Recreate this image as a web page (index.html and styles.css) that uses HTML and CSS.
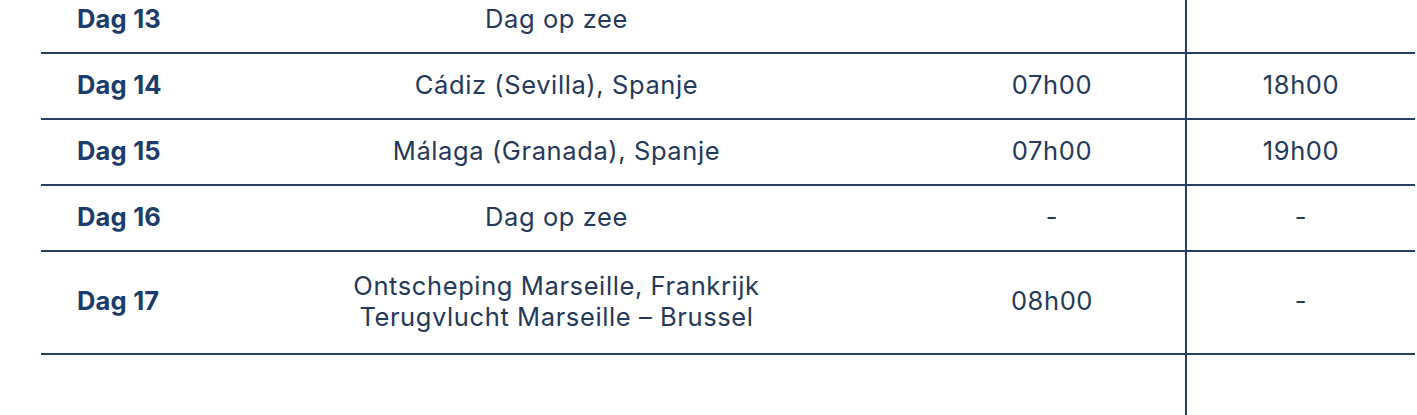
FILE: index.html
```html
<!DOCTYPE html>
<html lang="nl">
<head>
<meta charset="utf-8">
<title>Reisschema</title>
<link rel="stylesheet" href="styles.css">
</head>
<body>
<div class="schedule">
  <div class="row">
    <div class="cell day">Dag 13</div>
    <div class="cell place">Dag op zee</div>
    <div class="cell time"></div>
    <div class="cell time last"></div>
  </div>
  <div class="row">
    <div class="cell day">Dag 14</div>
    <div class="cell place">Cádiz (Sevilla), Spanje</div>
    <div class="cell time">07h00</div>
    <div class="cell time last">18h00</div>
  </div>
  <div class="row">
    <div class="cell day">Dag 15</div>
    <div class="cell place">Málaga (Granada), Spanje</div>
    <div class="cell time">07h00</div>
    <div class="cell time last">19h00</div>
  </div>
  <div class="row">
    <div class="cell day">Dag 16</div>
    <div class="cell place">Dag op zee</div>
    <div class="cell time">-</div>
    <div class="cell time last">-</div>
  </div>
  <div class="row tall">
    <div class="cell day">Dag 17</div>
    <div class="cell place">Ontscheping Marseille, Frankrijk<br>Terugvlucht Marseille – Brussel</div>
    <div class="cell time">08h00</div>
    <div class="cell time last">-</div>
  </div>
  <div class="row spacer">
    <div class="cell"></div>
    <div class="cell"></div>
    <div class="cell"></div>
    <div class="cell last"></div>
  </div>
</div>
</body>
</html>
```

FILE: styles.css
```css
html, body {
  margin: 0;
  padding: 0;
  background: #ffffff;
  overflow: hidden;
}

body {
  font-family: "Inter", "Lato", sans-serif;
  color: #25395a;
}

.schedule {
  margin: -12px 2px 0 41px;
}

.row {
  display: grid;
  grid-template-columns: 153px 725px 266px 1fr;
  height: 66px;
  box-sizing: border-box;
  border-bottom: 2px solid #243f63;
}

.row.tall {
  height: 103px;
}

.row.spacer {
  height: 80px;
  border-bottom: none;
}

.cell {
  display: flex;
  align-items: center;
  justify-content: center;
  text-align: center;
  font-size: 25.5px;
  font-weight: 400;
  letter-spacing: 0.6px;
  line-height: 31px;
  padding-bottom: 4px;
}

.cell.day {
  justify-content: flex-start;
  padding-left: 36px;
  font-weight: 700;
  letter-spacing: 0.2px;
  color: #1c3d6b;
}

.cell.last {
  border-left: 2px solid #243f63;
}
```
